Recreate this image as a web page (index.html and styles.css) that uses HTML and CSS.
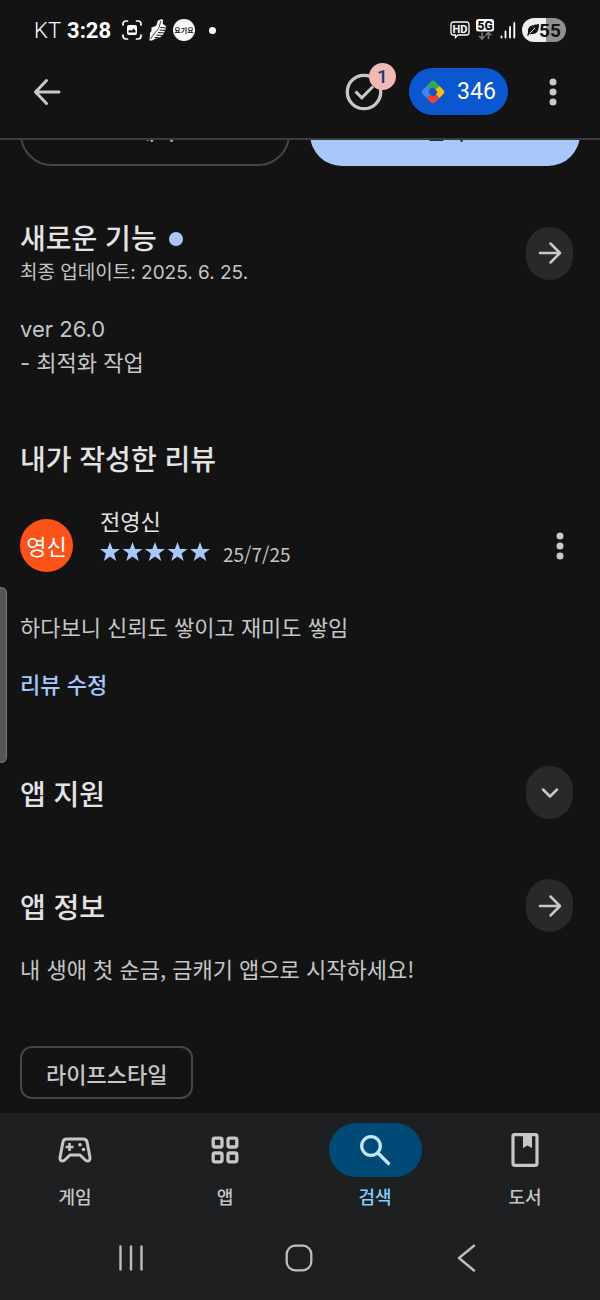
FILE: index.html
```html
<!DOCTYPE html>
<html lang="ko">
<head>
<meta charset="utf-8">
<meta name="viewport" content="width=device-width, initial-scale=1">
<title>앱 정보</title>
<link rel="stylesheet" href="styles.css">
</head>
<body>
<div class="screen">
  <div class="status">
    <div class="status-group">
      <span class="carrier">KT</span>
      <span class="clock">3:28</span>
      <svg class="st-icon" width="20" height="20" viewBox="0 0 20 20" fill="none" stroke="#fff" stroke-width="1.700" stroke-linecap="round">
        <path d="M1 5V4a3 3 0 0 1 3-3h1.500M14.500 1H16a3 3 0 0 1 3 3v1M19 15v1a3 3 0 0 1-3 3h-1.500M5.500 19H4a3 3 0 0 1-3-3v-1"/>
        <rect x="5" y="5" width="10" height="10" rx="2" fill="#fff" stroke="none"/>
        <path d="M6.500 12.500v-2l2-.5 1 .8 2-2.300 2 2v2z" fill="#131314" stroke="none"/>
      </svg>
      <svg class="st-shoe" width="18" height="22" viewBox="0 0 18 22">
        <path d="M9 1.500L13 0l1 1.500-.3 3.500 3.300 2-.8 4-1.700 4-3.500 3.500-4 1L3 21.500H.5L1 14l1.500-2V8.500L7 7z" fill="#fff"/>
        <path d="M12 2L9.500 9.500 5 15 1.500 20" stroke="#131314" stroke-width=".8" fill="none"/>
        <path d="M11.500 8.500l5 .5M10.500 11l5.500.5M9 13.500l6 .5M7.500 16l6 .5M5.500 18.500l5 .3" stroke="#131314" stroke-width="1" fill="none"/>
      </svg>
      <svg class="st-yo" width="22" height="22" viewBox="0 0 22 22">
        <circle cx="11" cy="11" r="11" fill="#fff"/>
        <text x="11" y="14" text-anchor="middle" class="yo-text">요기요</text>
      </svg>
      <span class="st-dot"></span>
    </div>
    <div class="status-group status-right">
      <svg width="20" height="18" viewBox="0 0 20 18">
        <path d="M3.500 1h13A2.500 2.500 0 0 1 19 3.500v8a2.500 2.500 0 0 1-2.500 2.500H8l-2.500 2.500V14h-2A2.500 2.500 0 0 1 1 11.500v-8A2.500 2.500 0 0 1 3.500 1z" fill="none" stroke="#fff" stroke-width="1.300"/>
        <text x="10" y="11.500" text-anchor="middle" class="hd-text">HD</text>
      </svg>
      <svg width="18" height="22" viewBox="0 0 18 22">
        <rect x="0" y="0" width="18" height="12.500" rx="2.500" fill="#fff"/>
        <text x="9" y="10.500" text-anchor="middle" class="fiveg-text">5G</text>
        <path d="M6 13.500v6M3.200 17l2.800 3 2.800-3M12.500 20v-6M9.700 16.500l2.800-3 2.800 3" fill="none" stroke="#77787a" stroke-width="1.600"/>
      </svg>
      <svg width="16" height="17" viewBox="0 0 16 17" stroke="#fff" stroke-width="1.800" stroke-linecap="round">
        <path d="M1.500 14.500v1M5.500 9.500v6M10 5v10.500M14.300 1v14.500"/>
      </svg>
      <span class="battery">
        <svg width="12" height="12" viewBox="0 0 12 12"><path d="M0 11c1-1 1-2 1-4C1 2 5 1 12 0c0 6-2 10-6 10-2 0-3-.5-4 .5L1 12z" fill="#131314"/><path d="M2.500 9.500L8 4" stroke="#eee" stroke-width="1"/></svg>55
      </span>
    </div>
  </div>

  <header class="appbar">
    <button class="icon-btn" aria-label="뒤로">
      <svg width="28" height="28" viewBox="0 0 28 28" fill="none" stroke="#c9c9c9" stroke-width="3" stroke-linecap="round" stroke-linejoin="round"><path d="M26 14H2.500M13.500 2.500L2.500 14l11 11.500"/></svg>
    </button>
    <div class="appbar-actions">
      <button class="icon-btn task" aria-label="할 일 1개">
        <svg width="38" height="38" viewBox="0 0 38 38" fill="none" stroke="#c9c9c9" stroke-width="3.300"><circle cx="19" cy="19" r="16.700"/><path d="M10.500 18.500l6.300 6.300L28 13.500" stroke-width="3"/></svg>
        <span class="badge">1</span>
      </button>
      <button class="points">
        <svg width="24" height="24" viewBox="0 0 24 24">
          <path d="M12 .5Q13 .5 14 1.500L18.500 6 15 9.500 12 7.500 8.500 9 5.500 6 10 1.500Q11 .5 12 .5z" fill="#34a853"/>
          <path d="M18.500 6l4.300 4.500q1.200 1.500 0 3L18.500 18 15 14.500 16.500 12 14.500 9.500z" fill="#fbbc04"/>
          <path d="M18.500 18L14 22.500q-2 1.500-4 0L5.500 18 9 14.500l3 2 3-2z" fill="#ea4335"/>
          <path d="M5.500 18L1.200 13.500q-1.200-1.500 0-3L5.500 6 9 9.500 7.500 12 9.500 14.500z" fill="#4285f4"/>
        </svg>
        <span>346</span>
      </button>
      <button class="icon-btn" aria-label="옵션 더보기">
        <svg width="8" height="28" viewBox="0 0 8 28" fill="#c9c9c9"><circle cx="4" cy="4" r="3.500"/><circle cx="4" cy="14" r="3.500"/><circle cx="4" cy="24" r="3.500"/></svg>
      </button>
    </div>
  </header>

  <main class="content">
    <div class="actions">
      <button class="action outline">제거</button>
      <button class="action filled">열기</button>
    </div>

    <section class="whats-new">
      <div class="section-head">
        <div>
          <h2>새로운 기능<span class="new-dot"></span></h2>
          <p class="updated">최종 업데이트: 2025. 6. 25.</p>
        </div>
        <button class="round-btn" aria-label="새로운 기능 자세히 보기">
          <svg width="24" height="24" viewBox="0 0 24 24" fill="none" stroke="#c9c9c9" stroke-width="2.500" stroke-linecap="round" stroke-linejoin="round"><path d="M2 12h19.500M12.500 2.500L22 12l-9.500 9.500"/></svg>
        </button>
      </div>
      <p class="notes">ver 26.0<br>- 최적화 작업</p>
    </section>

    <section class="review">
      <h2>내가 작성한 리뷰</h2>
      <div class="reviewer">
        <div class="avatar">영신</div>
        <div class="who">
          <span class="name">전영신</span>
          <div class="rating">
            <svg role="img" aria-label="별표 5개" width="110" height="20" viewBox="0 0 110 20" fill="#a8c7fa">
              <defs><path id="star" d="M10 0l2.600 7H20l-5.900 4.500L16.200 19 10 14.500 3.800 19l2.100-7.500L0 7h7.400z"/></defs>
              <use href="#star"/><use href="#star" x="22.500"/><use href="#star" x="45"/><use href="#star" x="67.500"/><use href="#star" x="90"/>
            </svg>
            <span class="date">25/7/25</span>
          </div>
        </div>
        <button class="icon-btn review-more" aria-label="리뷰 옵션">
          <svg width="8" height="28" viewBox="0 0 8 28" fill="#c9c9c9"><circle cx="4" cy="4" r="3.500"/><circle cx="4" cy="14" r="3.500"/><circle cx="4" cy="24" r="3.500"/></svg>
        </button>
      </div>
      <p class="body-text">하다보니 신뢰도 쌓이고 재미도 쌓임</p>
      <a class="edit" href="#edit">리뷰 수정</a>
    </section>

    <section class="section-head support">
      <h2>앱 지원</h2>
      <button class="round-btn" aria-label="앱 지원 펼치기">
        <svg width="24" height="24" viewBox="0 0 24 24" fill="none" stroke="#c9c9c9" stroke-width="2.500" stroke-linecap="round" stroke-linejoin="round"><path d="M5 8.500l7 7 7-7"/></svg>
      </button>
    </section>

    <section class="about">
      <div class="section-head">
        <h2>앱 정보</h2>
        <button class="round-btn" aria-label="앱 정보 자세히 보기">
          <svg width="24" height="24" viewBox="0 0 24 24" fill="none" stroke="#c9c9c9" stroke-width="2.500" stroke-linecap="round" stroke-linejoin="round"><path d="M2 12h19.500M12.500 2.500L22 12l-9.500 9.500"/></svg>
        </button>
      </div>
      <p class="body-text">내 생애 첫 순금, 금캐기 앱으로 시작하세요!</p>
      <button class="chip">라이프스타일</button>
    </section>
  </main>

  <nav class="tabs">
    <a class="tab" href="#games">
      <span class="pill"><svg width="34" height="26" viewBox="0 0 34 26" fill="none" stroke="#c7c7c9" stroke-width="3" stroke-linejoin="round"><path d="M8.500 2h17q2.800 0 3.500 2.800l3 15.700q.3 3.500-2.500 3.500-1.300 0-2.300-1L22 18H12l-5.200 5q-1 1-2.300 1-2.800 0-2.500-3.500L5 4.800Q5.700 2 8.500 2z"/><path d="M11.500 6v8M7.500 10h8" stroke-width="2.600"/><g fill="#c7c7c9" stroke="none"><circle cx="22" cy="7.800" r="1.800"/><circle cx="25.500" cy="12.500" r="1.800"/></g></svg></span>
      <span>게임</span>
    </a>
    <a class="tab" href="#apps">
      <span class="pill"><svg width="28" height="28" viewBox="0 0 28 28" fill="none" stroke="#c7c7c9" stroke-width="3.300"><rect x="2.200" y="2.200" width="8.800" height="8.800" rx="1.800"/><rect x="17" y="2.200" width="8.800" height="8.800" rx="1.800"/><rect x="2.200" y="17" width="8.800" height="8.800" rx="1.800"/><rect x="17" y="17" width="8.800" height="8.800" rx="1.800"/></svg></span>
      <span>앱</span>
    </a>
    <a class="tab active" href="#search" aria-current="page">
      <span class="pill"><svg width="32" height="32" viewBox="0 0 32 32" fill="none" stroke="#c2e7ff" stroke-width="3.200" stroke-linecap="round"><circle cx="12" cy="12" r="9.300"/><path d="M19 19l10.500 10.500"/></svg></span>
      <span>검색</span>
    </a>
    <a class="tab" href="#books">
      <span class="pill"><svg width="28" height="34" viewBox="0 0 28 34"><rect x="2" y="1.700" width="24" height="30.600" rx="1.500" fill="none" stroke="#c7c7c9" stroke-width="3.200"/><path d="M12 2h9v13l-4.500-2.500L12 15z" fill="#c7c7c9"/></svg></span>
      <span>도서</span>
    </a>
  </nav>

  <div class="sysnav">
    <button class="icon-btn" aria-label="최근 앱"><svg width="26" height="28" viewBox="0 0 26 28" stroke="#bdbdbf" stroke-width="2.400" stroke-linecap="round"><path d="M2.500 2.500v23M13 2.500v23M23.500 2.500v23"/></svg></button>
    <button class="icon-btn" aria-label="홈"><svg width="28" height="28" viewBox="0 0 28 28" fill="none" stroke="#bdbdbf" stroke-width="2.300"><rect x="1.700" y="1.700" width="24.600" height="24.600" rx="8.500"/></svg></button>
    <button class="icon-btn" aria-label="이전"><svg width="26" height="28" viewBox="0 0 26 28" fill="none" stroke="#bdbdbf" stroke-width="2.400" stroke-linecap="round" stroke-linejoin="round"><path d="M20 1.800L5 14l15 12.500"/></svg></button>
  </div>

  <div class="edge-handle"></div>
</div>
</body>
</html>
```
FILE: styles.css
```css
* { box-sizing: border-box; }

body {
  margin: 0;
  background: #131314;
  color: #e3e3e3;
  font-family: "Noto Sans CJK KR", sans-serif;
}

h2, p { margin: 0; }
svg { display: block; flex: none; }

button {
  border: 0;
  padding: 0;
  background: none;
  color: inherit;
  font: inherit;
}

a { text-decoration: none; }

.screen {
  position: relative;
  display: flex;
  flex-direction: column;
  min-height: 100vh;
}

/* Status bar */
.status {
  display: flex;
  justify-content: space-between;
  align-items: center;
  height: 60px;
  padding: 0 34px;
  color: #fff;
  font: 22px Roboto, sans-serif;
}

.status-group { display: flex; align-items: center; }
.status-right { gap: 6px; }
.carrier { font-weight: 300; }
.clock { margin-left: 6px; font-weight: 700; }
.st-icon { margin-left: 11px; }
.st-shoe { margin-left: 7px; }
.st-yo { margin-left: 6px; }
.st-dot { width: 7px; height: 7px; margin-left: 14px; border-radius: 50%; background: #fff; }
.yo-text { font: 700 7px "Noto Sans CJK KR", sans-serif; fill: #131314; }
.hd-text { font: 700 11px Roboto, sans-serif; fill: #fff; }
.fiveg-text { font: 900 12px Roboto, sans-serif; fill: #131314; }

.battery {
  display: flex;
  align-items: center;
  justify-content: center;
  width: 44px;
  height: 24px;
  border-radius: 12px;
  background: linear-gradient(90deg, #eee 55%, #909090 55%);
  color: #131314;
  font-size: 19px;
  font-weight: 700;
}

/* App bar */
.appbar {
  display: flex;
  justify-content: space-between;
  align-items: center;
  height: 80px;
  padding: 0 43px 15px 33px;
  border-bottom: 2px solid #3c3c3d;
}

.icon-btn { display: flex; align-items: center; justify-content: center; }
.appbar-actions { display: flex; align-items: center; }
.task { position: relative; margin-right: 26px; }

.badge {
  position: absolute;
  top: -10px;
  right: -13px;
  width: 27px;
  height: 27px;
  border-radius: 50%;
  background: #f2b8b5;
  color: #1b3a7a;
  font: 500 19px/27px Roboto, sans-serif;
}

.points {
  display: flex;
  align-items: center;
  justify-content: center;
  gap: 12px;
  width: 99px;
  height: 47px;
  margin-right: 41px;
  border-radius: 24px;
  background: #0b57d0;
  color: #fff;
  font: 23px Roboto, sans-serif;
}

/* Scrolled content */
.content {
  flex: 1;
  padding: 0 20px 14px;
  overflow: hidden;
}

.actions {
  display: grid;
  grid-template-columns: 1fr 1fr;
  gap: 20px;
  margin-top: -40px;
}

.action {
  height: 66px;
  padding-bottom: 8px;
  border-radius: 32px;
  font-size: 22px;
  font-weight: 500;
  line-height: 32px;
}

.outline { border: 2px solid #444746; color: #a8c7fa; }
.filled { background: #a8c7fa; color: #062e6f; }

h2 {
  font-size: 28px;
  font-weight: 500;
  line-height: 36px;
}

.section-head {
  display: flex;
  justify-content: space-between;
  align-items: center;
  padding-right: 7px;
}

.round-btn {
  display: flex;
  align-items: center;
  justify-content: center;
  flex: none;
  width: 47px;
  height: 53px;
  border-radius: 24px;
  background: #28292b;
}

.whats-new { margin-top: 53px; }

.new-dot {
  display: inline-block;
  width: 14px;
  height: 14px;
  margin-left: 12px;
  border-radius: 50%;
  background: #a8c7fa;
  vertical-align: 3px;
}

.updated {
  padding-top: 4px;
  color: #c4c7c5;
  font: 19px/28px Inter, "Noto Sans CJK KR", sans-serif;
}

.notes {
  margin-top: 25px;
  color: #c4c7c5;
  font: 22px/34px Inter, "Noto Sans CJK KR", sans-serif;
}

.review { margin-top: 60px; }

.reviewer {
  display: flex;
  align-items: center;
  margin-top: 24px;
  padding-right: 16px;
}

.avatar {
  width: 53px;
  height: 53px;
  margin-top: 19px;
  border-radius: 50%;
  background: #fb5219;
  color: #fff;
  font-size: 22px;
  line-height: 52px;
  text-align: center;
}

.who { flex: 1; margin-left: 27px; }
.name { display: block; font-size: 22px; line-height: 32px; }
.rating { display: flex; align-items: center; gap: 13px; }

.date {
  padding-top: 4px;
  color: #c4c7c5;
  font: 19px/28px "Noto Sans CJK KR", sans-serif;
}

.review-more { margin-top: 19px; }

.body-text {
  color: #c4c7c5;
  font-size: 22px;
  line-height: 34px;
}

.review .body-text { margin-top: 37px; }

.edit {
  display: inline-block;
  margin-top: 23px;
  color: #a8c7fa;
  font-size: 22px;
  font-weight: 500;
  line-height: 34px;
}

.support { margin-top: 66px; }
.about { margin-top: 60px; }
.about .body-text { margin-top: 19px; }

.chip {
  height: 53px;
  margin-top: 61px;
  padding: 0 24px;
  border: 2px solid #444746;
  border-radius: 12px;
  color: #c4c7c5;
  font-size: 22px;
  font-weight: 500;
}

/* Bottom navigation */
.tabs {
  display: grid;
  grid-template-columns: repeat(4, 1fr);
  padding: 10px 0 5px;
  background: #1e1f20;
}

.tab {
  display: flex;
  flex-direction: column;
  align-items: center;
  gap: 5px;
  color: #c4c7c5;
  font-size: 18px;
  font-weight: 500;
  line-height: 28px;
}

.pill {
  display: flex;
  align-items: center;
  justify-content: center;
  width: 93px;
  height: 54px;
  border-radius: 27px;
}

.active { color: #7fcfff; }
.active .pill { background: #004a77; }

.sysnav {
  display: flex;
  justify-content: space-between;
  align-items: center;
  height: 85px;
  padding: 0 120px 0 118px;
  background: #1e1f20;
}

.edge-handle {
  position: absolute;
  top: 587px;
  left: 0;
  width: 7px;
  height: 176px;
  border: 1px solid #777;
  border-left: 0;
  border-radius: 0 6px 6px 0;
  background: #555;
}
```
